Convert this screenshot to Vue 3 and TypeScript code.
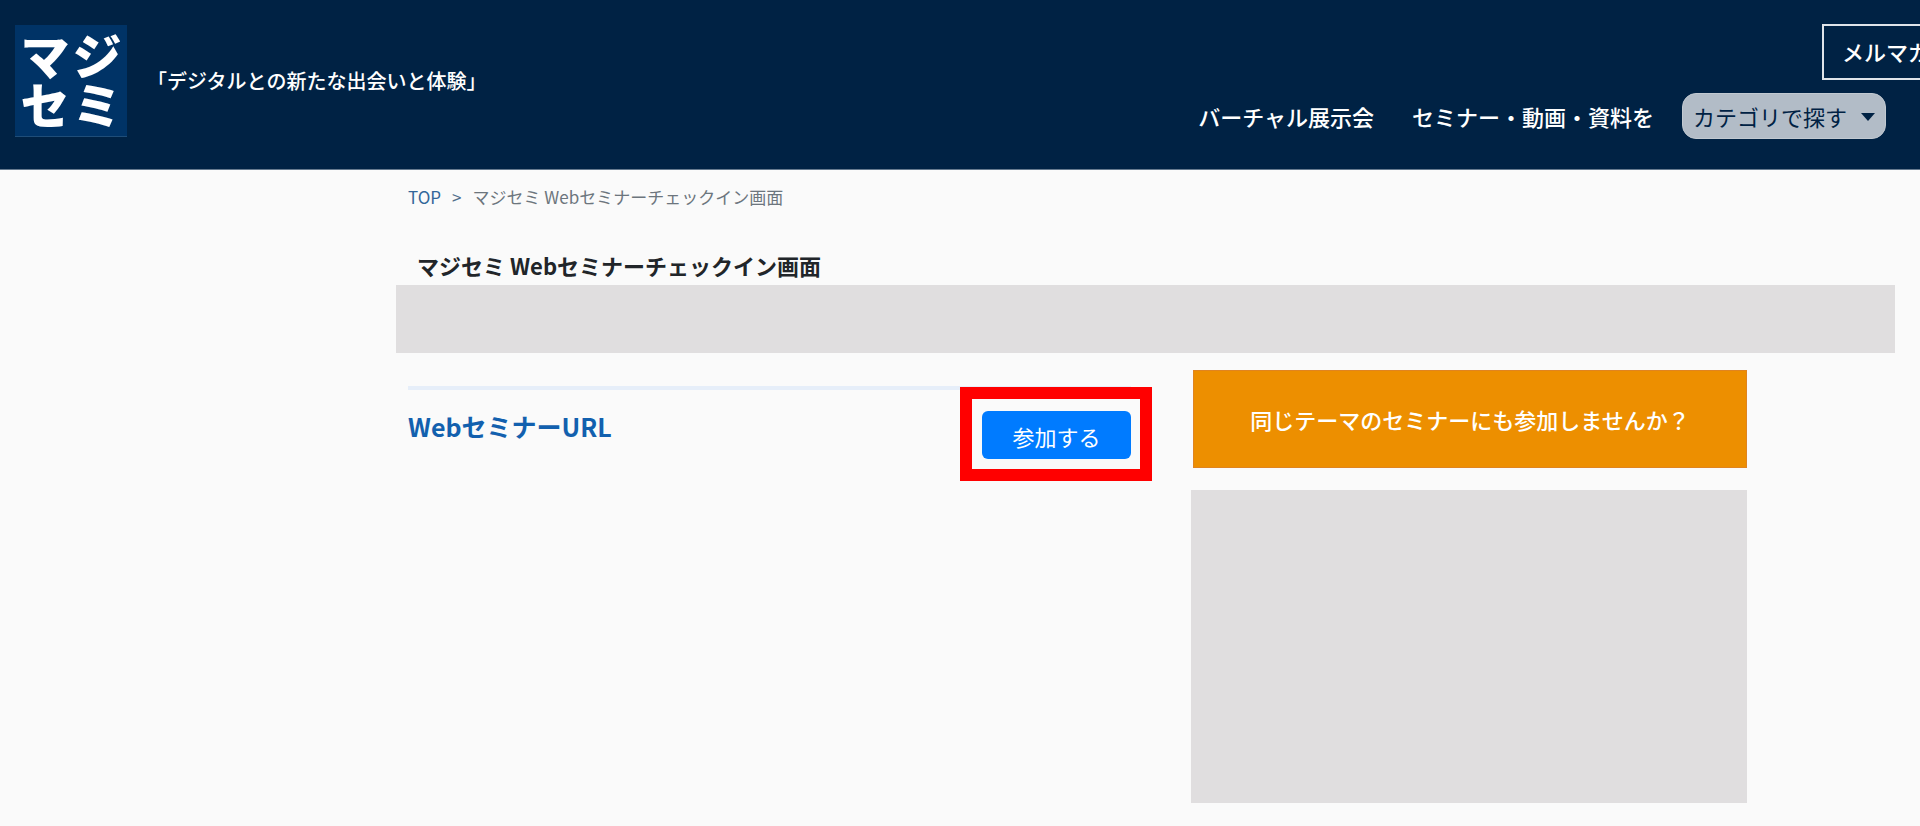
<script setup lang="ts">
import { ref } from 'vue'

const navLinks: string[] = ['バーチャル展示会', 'セミナー・動画・資料を']
const logoLetters: string[] = ['マ', 'ジ', 'セ', 'ミ']
const category = ref<string>('カテゴリで探す')
const pageTitle = 'マジセミ Webセミナーチェックイン画面'
</script>

<template>
  <div class="page">
    <header class="header">
      <a class="logo" href="#">
        <span v-for="letter in logoLetters" :key="letter">{{ letter }}</span>
      </a>
      <p class="tagline">「デジタルとの新たな出会いと体験」</p>
      <div class="menu">
        <a class="newsletter" href="#">メルマガ</a>
        <nav class="nav">
          <a v-for="link in navLinks" :key="link" class="nav-link" href="#">{{ link }}</a>
          <div class="category">
            <select v-model="category" class="category-select" aria-label="カテゴリで探す">
              <option>カテゴリで探す</option>
            </select>
            <svg class="caret" viewBox="0 0 14 8" aria-hidden="true"><path d="M0 0h14L7 8z" /></svg>
          </div>
        </nav>
      </div>
    </header>

    <main class="main">
      <nav class="breadcrumb">
        <a href="#">TOP</a>
        <span class="separator">&gt;</span>
        <span>{{ pageTitle }}</span>
      </nav>
      <h1 class="title">{{ pageTitle }}</h1>
      <div class="banner"></div>
      <div class="columns">
        <section class="seminar">
          <h2 class="seminar-title">WebセミナーURL</h2>
          <div class="highlight">
            <button class="join" type="button">参加する</button>
          </div>
        </section>
        <aside class="side">
          <button class="related" type="button">同じテーマのセミナーにも参加しませんか？</button>
          <div class="panel"></div>
        </aside>
      </div>
    </main>
  </div>
</template>

<style>
body {
  background: #fafafa;
}
</style>

<style scoped>
* {
  box-sizing: border-box;
}

.page {
  min-height: 100vh;
  overflow: hidden;
  color: #212529;
  font-family: 'Noto Sans CJK JP', sans-serif;
  font-size: 22px;
  line-height: 32px;
}

a {
  color: inherit;
  text-decoration: none;
}

button,
select {
  font: inherit;
}

.header {
  display: flex;
  align-items: flex-start;
  min-height: 170px;
  padding: 24px 34px 0 15px;
  border-bottom: 1px solid #667a8f;
  background: #002244;
  color: #fff;
  font-weight: 500;
}

.logo {
  display: grid;
  flex: none;
  grid-template-columns: 52px 52px;
  align-content: start;
  justify-content: center;
  width: 112px;
  height: 112px;
  margin-top: 1px;
  padding-top: 4px;
  border-bottom: 1px solid #1f4d78;
  background: #003366;
  font-size: 49px;
  font-weight: 900;
  line-height: 49px;
  text-align: center;
}

.tagline {
  flex: none;
  margin: 41px 0 0 20px;
  font-size: 20px;
}

.menu {
  display: flex;
  flex: 1;
  flex-direction: column;
  align-items: flex-end;
}

.newsletter {
  margin-right: -64px;
  padding: 9px 18px 11px;
  border: 2px solid #dfe4e9;
}

.nav {
  display: flex;
  align-items: center;
  margin-top: 13px;
}

.nav-link {
  margin-right: 38px;
  white-space: nowrap;
}

.nav-link:last-of-type {
  margin-right: 28px;
}

.category {
  position: relative;
}

.category-select {
  display: block;
  width: 204px;
  height: 46px;
  padding: 0 10px;
  appearance: none;
  border: 1px solid #c1c9d1;
  border-radius: 14px;
  background: #b2bcc7;
  color: #002244;
  font-weight: 400;
}

.caret {
  position: absolute;
  top: 20px;
  right: 11px;
  width: 14px;
  height: 8px;
  fill: #002244;
  pointer-events: none;
}

.main {
  padding: 12px 25px 24px 396px;
}

.breadcrumb {
  display: flex;
  gap: 11px;
  padding-left: 12px;
  color: #6c757d;
  font-size: 17px;
  line-height: 30px;
}

.breadcrumb a {
  color: #336699;
}

.separator {
  color: #526f8c;
}

.title {
  margin: 37px 0 4px 21px;
  font-size: 22px;
  font-weight: 700;
}

.banner {
  height: 68px;
  background: #e0dedf;
}

.columns {
  display: grid;
  grid-template-columns: 723fr 556fr;
  gap: 60px;
  margin: 17px 148px 0 12px;
}

.seminar {
  display: flex;
  align-items: flex-start;
  justify-content: space-between;
  margin-top: 16px;
  border-top: 4px solid #e6eef9;
}

.seminar-title {
  margin: 18px 0 0;
  color: #1260ae;
  font-size: 25px;
  font-weight: 700;
  line-height: 36px;
}

.highlight {
  margin: -3px -21px 0 0;
  padding: 12px 9px 10px 10px;
  border: 12px solid #f00;
  background: #fafafa;
}

.join {
  display: block;
  width: 149px;
  height: 48px;
  padding: 2px 0 0;
  border: 0;
  border-radius: 6px;
  background: #007bff;
  color: #fff;
}

.side {
  display: flex;
  flex-direction: column;
  gap: 22px;
}

.related {
  min-height: 98px;
  margin-left: 2px;
  border: 1px solid #e08420;
  background: #ed8f00;
  color: #fff;
  font-weight: 500;
}

.panel {
  height: 313px;
  background: #e0dedf;
}
</style>
